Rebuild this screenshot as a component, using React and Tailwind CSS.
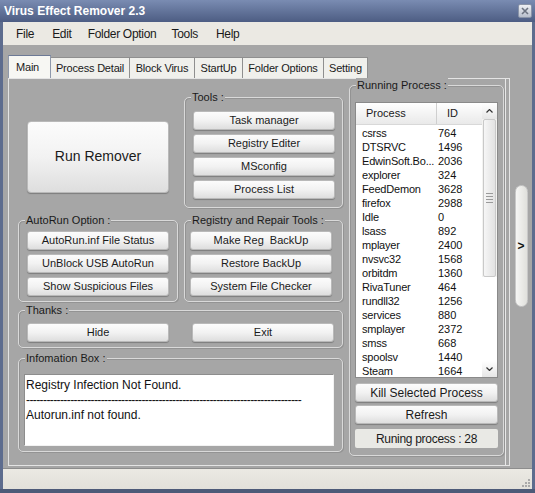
import React from "react";

const font = { fontFamily: '"Liberation Sans", Arial, sans-serif' };

function Btn({ children, className = "" }) {
  return (
    <div
      className={`flex items-center justify-center rounded-[3px] border border-[#b9b9b9] bg-linear-to-b from-[#fcfcfc] via-[#f2f2f2] to-[#dedede] text-[11px] text-[#1a1a1a] shadow-[0_1px_1px_rgba(0,0,0,0.25)] ${className}`}
    >
      {children}
    </div>
  );
}

function Group({ label, className = "", children }) {
  return (
    <div
      className={`relative rounded-[5px] border border-[#d9d9d9] shadow-[inset_1px_1px_0_#939393,1px_1px_0_#939393] ${className}`}
    >
      <span className="absolute -top-[8px] left-[6px] bg-[#a6a6a6] px-[1px] text-[11px] leading-[14px] text-[#1a1a1a]">
        {label}
      </span>
      {children}
    </div>
  );
}

const procs = [
  ["csrss", "764"],
  ["DTSRVC", "1496"],
  ["EdwinSoft.Bo...", "2036"],
  ["explorer", "324"],
  ["FeedDemon", "3628"],
  ["firefox", "2988"],
  ["Idle", "0"],
  ["lsass", "892"],
  ["mplayer", "2400"],
  ["nvsvc32", "1568"],
  ["orbitdm", "1360"],
  ["RivaTuner", "464"],
  ["rundll32", "1256"],
  ["services", "880"],
  ["smplayer", "2372"],
  ["smss", "668"],
  ["spoolsv", "1440"],
  ["Steam", "1664"],
];

export default function App() {
  return (
    <div style={font} className="flex h-[493px] w-[535px] flex-col overflow-hidden bg-[#a6a6a6]">
      {/* Title bar */}
      <div className="flex h-[22px] shrink-0 items-center justify-between bg-linear-to-b from-[#7a8cb2] to-[#4d5d83] pl-[4px] pr-[3px]">
        <span className="text-[12px] font-bold text-white">Virus Effect Remover 2.3</span>
        <div className="flex h-[14px] w-[14px] items-center justify-center rounded-[2px] border border-[#8a94a8] bg-linear-to-b from-[#eef0f4] to-[#b8bfcc]">
          <svg width="8" height="8" viewBox="0 0 8 8">
            <path d="M1 1 L7 7 M7 1 L1 7" stroke="#6b7280" strokeWidth="1.6" />
          </svg>
        </div>
      </div>

      <div className="flex flex-1 flex-col border-x-[3px] border-[#5d6c8e]">
        {/* Menu bar */}
        <div className="flex h-[23px] shrink-0 items-center bg-[#ebe9e3] pl-[13px] text-[12px] tracking-[-0.3px] text-[#1a1a1a]">
          <span className="mr-[18px]">File</span>
          <span className="mr-[16px]">Edit</span>
          <span className="mr-[15px]">Folder Option</span>
          <span className="mr-[18px]">Tools</span>
          <span>Help</span>
        </div>

        {/* Body */}
        <div className="flex flex-1 bg-[#a6a6a6] pl-[5px] pt-[10px]">
          <div className="flex w-[502px] flex-col">
            {/* Tabs */}
            <div className="flex h-[23px] items-end text-[11px] tracking-[-0.2px] text-[#1a1a1a]">
              <div className="relative z-10 flex h-[23px] w-[43px] items-center border border-b-0 border-[#8e98ab] border-t-[#6d7a96] bg-[#f7f7f3] pl-[7px]">
                Main
              </div>
              <div className="flex h-[21px] w-[79px] items-center justify-center border border-l-0 border-b-0 border-[#8f8f8f] bg-[#f0f0ec]">
                Process Detail
              </div>
              <div className="flex h-[21px] w-[65px] items-center justify-center border border-l-0 border-b-0 border-[#8f8f8f] bg-[#f0f0ec]">
                Block Virus
              </div>
              <div className="flex h-[21px] w-[48px] items-center justify-center border border-l-0 border-b-0 border-[#8f8f8f] bg-[#f0f0ec]">
                StartUp
              </div>
              <div className="flex h-[21px] w-[81px] items-center justify-center border border-l-0 border-b-0 border-[#8f8f8f] bg-[#f0f0ec]">
                Folder Options
              </div>
              <div className="flex h-[21px] w-[44px] items-center justify-center border border-l-0 border-b-0 border-[#8f8f8f] bg-[#f0f0ec]">
                Setting
              </div>
            </div>

            {/* Panel */}
            <div className="flex h-[388px] border border-[#e4e4e4] shadow-[inset_-3px_0_0_#a6a6a6,inset_-4px_0_0_#e8e8e8] pl-[9px]">
              {/* Left column */}
              <div className="mt-[18px] flex w-[325px] flex-col">
                <div className="flex h-[111px] gap-[6px]">
                  <div className="flex w-[160px] items-center pl-[9px]">
                    <Btn className="mt-[8px] h-[72px] w-[142px] !text-[14px] !rounded-[4px]">Run Remover</Btn>
                  </div>
                  <Group label="Tools :" className="flex w-[159px] flex-col gap-[4px] pl-[8px] pt-[13px]">
                    <Btn className="h-[19px] w-[142px]">Task manager</Btn>
                    <Btn className="h-[19px] w-[142px]">Registry Editer</Btn>
                    <Btn className="h-[19px] w-[142px]">MSconfig</Btn>
                    <Btn className="h-[19px] w-[142px]">Process List</Btn>
                  </Group>
                </div>

                <div className="mt-[12px] flex h-[82px] gap-[6px]">
                  <Group label="AutoRun Option :" className="flex w-[160px] flex-col gap-[4px] pl-[8px] pt-[10px]">
                    <Btn className="h-[19px] w-[142px]">AutoRun.inf File Status</Btn>
                    <Btn className="h-[19px] w-[142px]">UnBlock USB AutoRun</Btn>
                    <Btn className="h-[19px] w-[142px]">Show Suspicious Files</Btn>
                  </Group>
                  <Group label="Registry and Repair Tools :" className="flex w-[159px] flex-col gap-[4px] pl-[5px] pt-[10px]">
                    <Btn className="h-[19px] w-[142px]">Make Reg&nbsp; BackUp</Btn>
                    <Btn className="h-[19px] w-[142px]">Restore BackUp</Btn>
                    <Btn className="h-[19px] w-[142px]">System File Checker</Btn>
                  </Group>
                </div>

                <Group label="Thanks :" className="mt-[8px] flex h-[38px] gap-[23px] pl-[8px] pt-[12px]">
                  <Btn className="h-[19px] w-[142px]">Hide</Btn>
                  <Btn className="h-[19px] w-[142px]">Exit</Btn>
                </Group>

                <Group label="Infomation Box :" className="mt-[10px] h-[94px] pl-[5px] pt-[15px]">
                  <div className="h-[72px] w-[310px] overflow-hidden border border-[#8d8d8d] border-b-[#f2f2f2] border-r-[#f2f2f2] bg-white pl-[1px] pt-[3px] text-[12px] leading-[15px] text-[#111]">
                    <div>Registry Infection Not Found.</div>
                    <div className="tracking-[-0.6px]">
                      {"-".repeat(81)}
                    </div>
                    <div>Autorun.inf not found.</div>
                  </div>
                </Group>
              </div>

              {/* Right column */}
              <Group label="Running Process :" className="ml-[6px] mt-[6px] flex h-[371px] w-[155px] flex-col pl-[5px] pt-[16px]">
                <div className="flex h-[276px] w-[143px] shrink-0 overflow-hidden border border-[#8a8a8a] bg-white">
                  <div className="flex min-h-0 flex-1 flex-col overflow-hidden">
                    <div className="flex h-[22px] shrink-0 border-b border-[#d8d8d8] bg-linear-to-b from-[#ffffff] to-[#e9e9e9] text-[11px] text-[#1a1a1a]">
                      <div className="flex w-[81px] items-center border-r border-[#cfcfcf] pl-[10px]">Process</div>
                      <div className="flex flex-1 items-center pl-[10px]">ID</div>
                    </div>
                    <div className="flex min-h-0 flex-1 flex-col overflow-hidden pt-[1px] text-[11px] leading-[14px] text-[#111]">
                      {procs.map(([n, id]) => (
                        <div key={n} className="flex h-[14px] shrink-0">
                          <span className="w-[82px] whitespace-nowrap pl-[6px] tracking-[-0.2px]">{n}</span>
                          <span>{id}</span>
                        </div>
                      ))}
                    </div>
                  </div>
                  {/* scrollbar */}
                  <div className="flex w-[15px] flex-col bg-[#f3f3f1]">
                    <div className="flex h-[16px] items-center justify-center bg-linear-to-b from-white to-[#e6e6e6]">
                      <svg width="7" height="4" viewBox="0 0 7 4"><path d="M0.5 3.5 L3.5 0.5 L6.5 3.5" fill="none" stroke="#333" strokeWidth="1.2" /></svg>
                    </div>
                    <div className="mx-[1px] flex h-[158px] items-center justify-center rounded-[2px] border border-[#c9c9c9] bg-linear-to-r from-[#f6f6f6] to-[#e2e2e2]">
                      <div className="flex flex-col gap-[2px]">
                        <div className="h-px w-[7px] bg-[#9a9a9a]" />
                        <div className="h-px w-[7px] bg-[#9a9a9a]" />
                        <div className="h-px w-[7px] bg-[#9a9a9a]" />
                        <div className="h-px w-[7px] bg-[#9a9a9a]" />
                      </div>
                    </div>
                    <div className="flex-1 bg-white" />
                    <div className="flex h-[16px] items-center justify-center bg-linear-to-b from-white to-[#e6e6e6]">
                      <svg width="7" height="4" viewBox="0 0 7 4"><path d="M0.5 0.5 L3.5 3.5 L6.5 0.5" fill="none" stroke="#333" strokeWidth="1.2" /></svg>
                    </div>
                  </div>
                </div>
                <Btn className="mt-[5px] h-[19px] w-[143px] !text-[12px]">Kill Selected Process</Btn>
                <Btn className="mt-[3px] h-[19px] w-[143px] !text-[12px]">Refresh</Btn>
                <div className="mt-[5px] flex h-[19px] w-[143px] items-center justify-center rounded-[2px] bg-[#e9e9e5] text-[12px] tracking-[-0.3px] text-[#1a1a1a]">
                  Runing process : 28
                </div>
              </Group>
            </div>
          </div>

          {/* right strip */}
          <div className="flex flex-1 justify-center pt-[130px]">
            <div className="flex h-[122px] w-[13px] items-center justify-center rounded-full border border-[#c8c8c8] bg-linear-to-r from-[#f6f6f4] to-[#e0e0dc]">
              <span className="text-[12px] font-bold text-[#111]">&gt;</span>
            </div>
          </div>
        </div>

        {/* Status bar */}
        <div className="relative h-[21px] shrink-0 border-t border-[#8d8d8d] bg-linear-to-b from-[#ebe9e3] to-[#e2e0da]">
          <div className="absolute bottom-[2px] right-[2px] grid grid-cols-3 gap-[1px]">
            {[0, 1, 2, 3, 4, 5, 6, 7, 8].map((i) => (
              <div key={i} className={`h-[2px] w-[2px] ${[0, 1, 3].includes(i) ? "bg-transparent" : "bg-[#a9a9a9]"}`} />
            ))}
          </div>
        </div>
      </div>
      <div className="h-[4px] shrink-0 bg-[#4d5a78]" />
    </div>
  );
}
